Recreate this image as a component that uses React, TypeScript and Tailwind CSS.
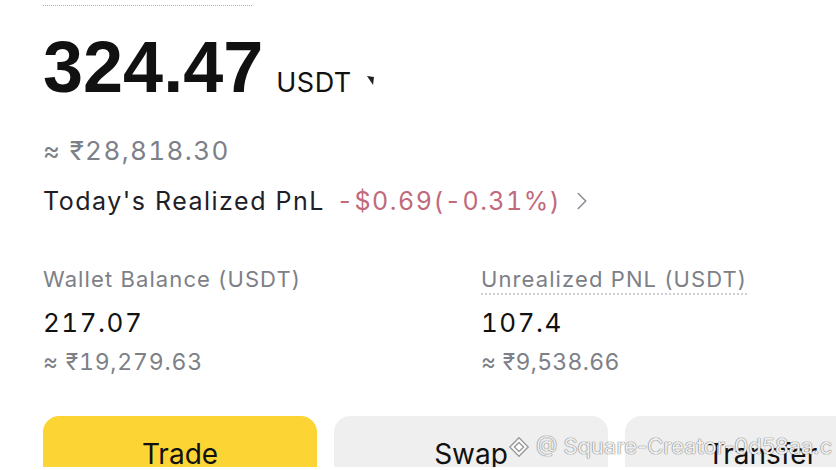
import { ChevronRight } from "lucide-react";

const font = { fontFamily: "Inter, 'Noto Sans', sans-serif" };

export default function App() {
  return (
    <div className="relative h-[470px] w-[836px] overflow-hidden bg-white" style={font}>
      <div className="flex flex-col px-[43px]">
        {/* label underline, label is off-screen */}
        <div className="h-[6px] w-[209px] border-b border-dotted border-[#aab0b8]" />

        {/* total */}
        <div className="mt-[25px] flex items-baseline">
          <span className="font-['Liberation_Sans',Arial,sans-serif] text-[72px] font-bold leading-[72px] text-[#111]">324.47</span>
          <span className="ml-[13px] text-[27px] leading-none tracking-[0.5px] text-[#111]">USDT</span>
          <svg width="8" height="9" viewBox="0 0 8 9" className="ml-[15px] self-center mt-[26px]">
            <path d="M0 0 L7 1 L6 9 Z" fill="#222" />
          </svg>
        </div>

        <div className="mt-[32px] text-[26px] leading-[32px] tracking-[1.4px] tabular-nums text-[#7d8087]">≈ ₹28,818.30</div>

        <div className="mt-[18px] flex items-center text-[25px] leading-[32px] tracking-[1.5px]">
          <span className="text-[#1e2026]">Today's Realized PnL</span>
          <span className="ml-[12px] tabular-nums text-[#c06a7c]">-$0.69(-0.31%)</span>
          <ChevronRight size={30} strokeWidth={1.3} className="ml-[6px] text-[#8a8f96]" />
        </div>

        {/* balances */}
        <div className="mt-[48px] grid grid-cols-[438px_1fr]">
          <div className="flex flex-col">
            <span className="text-[22px] leading-[28px] tracking-[1.1px] text-[#7d8087]">Wallet Balance (USDT)</span>
            <span className="mt-[14px] text-[26px] leading-[32px] tracking-[1.5px] tabular-nums text-[#111]">217.07</span>
            <span className="mt-[9px] text-[23px] leading-[28px] tracking-[0.8px] tabular-nums text-[#7d8087]">≈ ₹19,279.63</span>
          </div>
          <div className="flex flex-col">
            <span className="w-fit border-b-2 border-dotted border-[#cdd0d5] text-[22px] leading-[28px] tracking-[1.1px] text-[#7d8087]">
              Unrealized PNL (USDT)
            </span>
            <span className="mt-[12px] text-[26px] leading-[32px] tracking-[1.5px] tabular-nums text-[#111]">107.4</span>
            <span className="mt-[9px] text-[23px] leading-[28px] tracking-[0.3px] tabular-nums text-[#7d8087]">≈ ₹9,538.66</span>
          </div>
        </div>

        {/* actions */}
        <div className="mt-[40px] flex gap-[17px]">
          {[
            { label: "Trade", bg: "bg-[#fcd535]" },
            { label: "Swap", bg: "bg-[#efefef]" },
            { label: "Transfer", bg: "bg-[#efefef]" },
          ].map(b => (
            <div
              key={b.label}
              className={`h-[51px] w-[274px] shrink-0 overflow-hidden rounded-t-[16px] ${b.bg} pt-[22px] text-center text-[28px] leading-[32px] text-[#111]`}
            >
              {b.label}
            </div>
          ))}
        </div>
      </div>

      {/* watermark */}
      <div
        className="absolute left-[508px] top-[430px] flex items-center gap-[6px] text-[22px] text-white/90"
        style={{ textShadow: "0 0 1px #666, 0 0 1px #666" }}
      >
        <svg width="22" height="22" viewBox="0 0 24 24" fill="none" stroke="#999" strokeWidth="1.5">
          <path d="M12 2 L22 12 L12 22 L2 12 Z" fill="white" />
          <path d="M12 7 L17 12 L12 17 L7 12 Z" />
        </svg>
        <span>@ Square-Creator-0d58aa.c</span>
      </div>
    </div>
  );
}
